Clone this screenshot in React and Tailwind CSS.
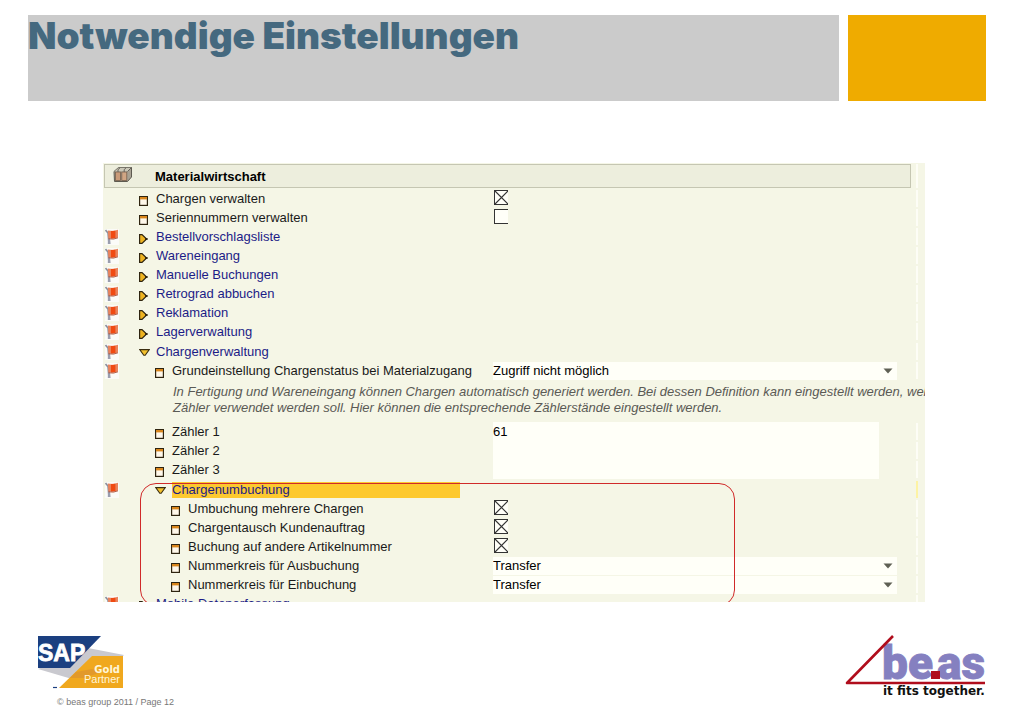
import { useState } from 'react';

const collapsed = [
  'Bestellvorschlagsliste',
  'Wareneingang',
  'Manuelle Buchungen',
  'Retrograd abbuchen',
  'Reklamation',
  'Lagerverwaltung',
];

const indents = ['ml-0', 'ml-4', 'ml-8'];

function Flag() {
  return (
    <svg viewBox="0 0 14 16" className="h-4 w-3.5" aria-hidden="true">
      <rect width="14" height="16" fill="#fbfbf8" />
      <path d="M0.5 1 L3 4 L4 15" fill="none" stroke="#8a8f9c" strokeWidth="1.6" />
      <path d="M3 9 L2.8 15 L5.6 15 L5 9 Z" fill="#9a9eae" />
      <path d="M2.8 1.6 L8 2 L13 0.8 L13 8.6 L8.5 9.8 L3.4 9.6 Z" fill="#e9835c" />
      <path d="M6 2 L10.4 1.7 L10.4 9 L6 9.6 Z" fill="#f04a12" />
      <path d="M3.4 9.8 L8.5 10.1 L13 8.8" fill="none" stroke="#a9503a" strokeWidth="0.9" />
    </svg>
  );
}

function ItemIcon() {
  return (
    <svg viewBox="0 0 9 10" className="mt-1 h-2.5 w-[9px]" aria-hidden="true">
      <rect x="0.6" y="0.6" width="7.8" height="8.8" fill="#fff8ea" stroke="#2e2410" strokeWidth="1.2" />
      <rect x="1" y="1" width="7" height="2.4" fill="#d9861c" />
    </svg>
  );
}

function ClosedIcon() {
  return (
    <svg viewBox="0 0 9 10" className="mt-1 h-2.5 w-[9px]" aria-hidden="true">
      <path d="M0.6 0.6 H3 L6.6 4 V6 L3 9.4 H0.6 Z" fill="#eeb321" stroke="#2e2410" strokeWidth="1.2" />
      <rect x="7" y="4" width="1.6" height="2" fill="#2e2410" />
    </svg>
  );
}

function OpenIcon() {
  return (
    <svg viewBox="0 0 11 7" className="mt-px h-[7px] w-[11px]" aria-hidden="true">
      <path d="M0.7 0.6 H10.3 L6.2 6.2 H4.8 Z" fill="#f2c02c" stroke="#3a2d10" strokeWidth="1.1" />
    </svg>
  );
}

function BoxIcon() {
  return (
    <svg viewBox="0 0 20 17" className="mb-1 h-[17px] w-5" aria-hidden="true">
      <path d="M1 5.5 L5.5 1.5 H18.5 V11 L14.5 15.5 H1.5 Z" fill="#a8a294" stroke="#5d5a50" />
      <path d="M1.5 5.5 L5.5 1.8 H18.2 L14.5 5.5 Z" fill="#cbc8b8" />
      <rect x="2.5" y="6" width="5" height="8.5" fill="#c99a78" stroke="#77604e" strokeWidth="0.8" />
      <rect x="8.8" y="6" width="5" height="8.5" fill="#d1a684" stroke="#77604e" strokeWidth="0.8" />
      <path d="M5 6 V3.6 L7 1.8 M11.2 6 V3.6 L13 1.8 M14.5 5.5 L18.5 1.5" fill="none" stroke="#66625a" />
    </svg>
  );
}

function Row({ id, label, flag, icon, level = 0, link, active, children }) {
  const text = link ? 'text-[#1c1c86]' : 'text-[#1a1a1a]';
  return (
    <div className="flex h-[19px] items-center">
      <div className="flex w-[357px] shrink-0 items-center">
        <div className="w-[35px] shrink-0 pl-0.5">{flag && <Flag />}</div>
        <div className={`w-[18px] shrink-0 pl-px ${indents[level]}`}>{icon}</div>
        {link ? (
          <a href="#" className={`grow leading-4 whitespace-nowrap ${text} ${active ? 'bg-[#fdc92f]' : ''}`}>
            {label}
          </a>
        ) : (
          <label htmlFor={id} className={`grow leading-4 whitespace-nowrap ${text}`}>
            {label}
          </label>
        )}
      </div>
      <div className="ml-[33px] flex h-full grow items-center">{children}</div>
      <div className={`mr-[7px] ml-[19px] h-[17px] w-0.5 shrink-0 ${active ? 'bg-[#fdf3a4]' : 'bg-[#fdfdf6]'}`} />
    </div>
  );
}

function CheckRow({ id, label, level, defaultChecked = false }) {
  const [checked, setChecked] = useState(defaultChecked);
  return (
    <Row id={id} label={label} level={level} icon={<ItemIcon />}>
      <span className="relative mb-0.5 ml-px block h-[15px] w-3.5">
        <input
          id={id}
          type="checkbox"
          checked={checked}
          onChange={(e) => setChecked(e.target.checked)}
          className="block h-[15px] w-3.5 appearance-none border border-r-0 border-[#333] bg-[#fffff8]"
        />
        {checked && (
          <svg viewBox="0 0 14 15" className="pointer-events-none absolute inset-0 h-[15px] w-3.5" aria-hidden="true">
            <path d="M1 1 L14 14 M14 1 L1 14" stroke="#333" strokeWidth="1.1" />
          </svg>
        )}
      </span>
    </Row>
  );
}

function SelectRow({ id, label, level, flag, value }) {
  return (
    <Row id={id} label={label} level={level} flag={flag} icon={<ItemIcon />}>
      <div className="relative h-[18px] grow">
        <select id={id} className="block h-[18px] w-full appearance-none bg-[#fffff8] leading-4 text-black">
          <option>{value}</option>
        </select>
        <svg viewBox="0 0 10 6" className="pointer-events-none absolute top-1.5 right-1 h-1.5 w-2.5" aria-hidden="true">
          <path d="M0.5 0.5 H9.5 L5 5.5 Z" fill="#5f6054" />
        </svg>
      </div>
    </Row>
  );
}

function InputRow({ id, label, value = '' }) {
  return (
    <Row id={id} label={label} level={1} icon={<ItemIcon />}>
      <input
        id={id}
        type="text"
        defaultValue={value}
        className="mr-[18px] h-full w-0 grow bg-[#fffff8] leading-4 text-black outline-none"
      />
    </Row>
  );
}

function SapLogo() {
  return (
    <svg viewBox="0 0 88 54" className="h-[54px] w-[88px]" role="img" aria-label="SAP Gold Partner">
      <path d="M0 33 L50 12 L86 19 L60 42 L34 43 Z" fill="#c9c9cf" />
      <path d="M0 0 H63 L32 32 H0 Z" fill="#1b3f80" />
      <path d="M54 20 H85 V52 H21 Z" fill="#f0a81e" />
      <path d="M38 36 L54 33 L64 36 L46 42 L32 42 Z" fill="#e2992a" />
      <text x="0" y="25" fontFamily="'Liberation Sans', sans-serif" fontWeight="700" fontSize="23" fill="#fff" stroke="#fff" strokeWidth="0.8">
        SAP
      </text>
      <text x="82" y="37" textAnchor="end" fontFamily="'DejaVu Sans', sans-serif" fontWeight="700" fontSize="10" fill="#fff6d8">
        Gold
      </text>
      <text x="82" y="47" textAnchor="end" fontFamily="'Liberation Sans', sans-serif" fontSize="11" fill="#fff6d8">
        Partner
      </text>
      <path d="M15 51.5 H19" stroke="#1b3f80" strokeWidth="1.2" />
    </svg>
  );
}

function BeasLogo() {
  return (
    <svg viewBox="0 0 142 64" className="h-16 w-[142px]" role="img" aria-label="be.as it fits together.">
      <g fontFamily="Roboto, sans-serif" fontWeight="900" fontSize="46" fill="#8580c0" stroke="#8580c0" strokeWidth="0.8">
        <text x="37" y="45">be</text>
        <text x="92" y="45">as</text>
      </g>
      <rect x="86" y="37" width="9" height="8" fill="#b00d1c" />
      <path d="M48 2 L2 49 H140" fill="none" stroke="#b00d1c" strokeWidth="2.6" strokeLinejoin="round" />
      <text x="38" y="61" fontFamily="'DejaVu Sans', sans-serif" fontWeight="700" fontSize="12" fill="#111">
        it fits together.
      </text>
    </svg>
  );
}

export default function App() {
  return (
    <div className="bg-white pt-[15px] font-['Liberation_Sans',Arial,sans-serif]">
      <header className="mr-[38px] ml-7 flex h-[86px] gap-[9px]">
        <div className="grow bg-[#cbcbcb]">
          <h1 className="font-['Inter',sans-serif] text-[37px] leading-[42px] font-black text-[#45697f]">
            Notwendige Einstellungen
          </h1>
        </div>
        <div className="w-[138px] bg-[#efab00]" />
      </header>

      <main className="mt-[62px] mr-[99px] ml-[103px] overflow-hidden bg-[#f5f6e6] pt-px text-[13px]">
        <div className="flex">
          <div className="ml-px flex h-6 grow items-center border border-[#c5c6b2] bg-[#edeedd] pl-2">
            <BoxIcon />
            <h2 className="ml-[22px] pt-0.5 font-bold text-black">Materialwirtschaft</h2>
          </div>
          <div className="mr-[7px] ml-[5px] w-0.5 bg-[#fdfdf6]" />
        </div>

        <section className="pt-px">
          <CheckRow id="chargen" label="Chargen verwalten" defaultChecked />
          <CheckRow id="serien" label="Seriennummern verwalten" />
        </section>

        <section>
          {collapsed.map((name) => (
            <Row key={name} label={name} flag link icon={<ClosedIcon />} />
          ))}
        </section>

        <section className="pt-px">
          <Row label="Chargenverwaltung" flag link icon={<OpenIcon />} />
          <SelectRow
            id="status"
            label="Grundeinstellung Chargenstatus bei Materialzugang"
            level={1}
            flag
            value="Zugriff nicht möglich"
          />
          <p className="h-[42px] pt-1 pl-[70px] leading-4 whitespace-nowrap text-[#5a5a55] italic">
            In Fertigung und Wareneingang können Chargen automatisch generiert werden. Bei dessen Definition kann
            eingestellt werden, welche
            <br />
            Zähler verwendet werden soll. Hier können die entsprechende Zählerstände eingestellt werden.
          </p>
          <InputRow id="z1" label="Zähler 1" value="61" />
          <InputRow id="z2" label="Zähler 2" />
          <InputRow id="z3" label="Zähler 3" />
        </section>

        <section className="relative pt-px">
          <Row label="Chargenumbuchung" level={1} flag link active icon={<OpenIcon />} />
          <CheckRow id="mehrere" label="Umbuchung mehrere Chargen" level={2} defaultChecked />
          <CheckRow id="tausch" label="Chargentausch Kundenauftrag" level={2} defaultChecked />
          <CheckRow id="artikel" label="Buchung auf andere Artikelnummer" level={2} defaultChecked />
          <SelectRow id="ausbuchung" label="Nummerkreis für Ausbuchung" level={2} value="Transfer" />
          <SelectRow id="einbuchung" label="Nummerkreis für Einbuchung" level={2} value="Transfer" />
          {/* red marker around the group */}
          <div className="pointer-events-none absolute top-1 -bottom-3 left-[37px] w-[595px] rounded-2xl border border-[#d02a2a]" />
        </section>

        <div className="h-2 overflow-hidden">
          <Row label="Mobile Datenerfassung" flag link icon={<ClosedIcon />} />
        </div>
      </main>

      <footer className="mt-8 mr-[37px] ml-[38px] flex items-start justify-between">
        <div className="pt-0.5">
          <SapLogo />
          <p className="mt-1 ml-[19px] text-[9px] leading-4 text-[#777]">© beas group 2011 / Page 12</p>
        </div>
        <BeasLogo />
      </footer>
    </div>
  );
}
